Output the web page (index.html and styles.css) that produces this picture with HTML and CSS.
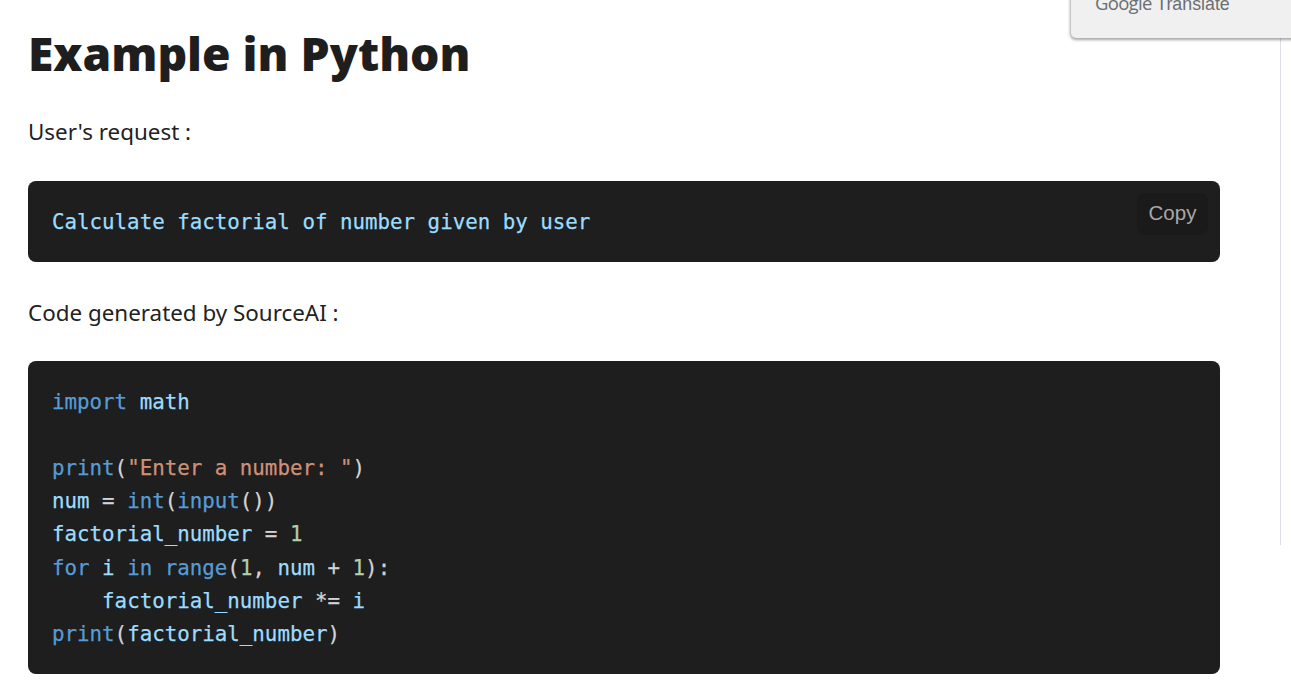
FILE: index.html
```html
<!DOCTYPE html>
<html lang="en">
<head>
<meta charset="utf-8">
<title>Example in Python</title>
<link rel="stylesheet" href="styles.css">
</head>
<body>
<div class="page">
  <main class="content">
    <h1 class="title">Example in Python</h1>
    <p class="text">User's request :</p>
    <div class="code-block">
      <button class="copy" type="button">Copy</button>
      <pre class="code"><span class="var">Calculate factorial of number given by user</span></pre>
    </div>
    <p class="text">Code generated by SourceAI :</p>
    <div class="code-block">
      <pre class="code"><span class="kw">import</span> <span class="var">math</span>

<span class="kw">print</span>(<span class="str">"Enter a number: "</span>)
<span class="var">num</span> = <span class="kw">int</span>(<span class="kw">input</span>())
<span class="var">factorial_number</span> = <span class="num">1</span>
<span class="kw">for</span> <span class="var">i</span> <span class="kw">in</span> <span class="kw">range</span>(<span class="num">1</span>, <span class="var">num</span> + <span class="num">1</span>):
    <span class="var">factorial_number</span> *= <span class="var">i</span>
<span class="kw">print</span>(<span class="var">factorial_number</span>)</pre>
    </div>
  </main>
  <aside class="rail"></aside>
</div>
<div class="translate"><span class="brand">Google</span> <span class="word">Translate</span></div>
</body>
</html>
```
FILE: styles.css
```css
html, body {
  margin: 0;
  height: 100%;
  overflow: hidden;
  background: #fff;
}
.page {
  display: flex;
  align-items: flex-start;
  height: 692px;
}
.content {
  width: 1192px;
  margin-left: 28px;
  flex: none;
}
.title {
  margin: 25px 0 0;
  font: 800 46.2px/57px "Open Sans", sans-serif;
  color: #1e1e1e;
}
.text {
  margin: 32px 0 0;
  font: 400 22.4px/35px "Noto Sans", sans-serif;
  color: #222;
}
.code-block {
  position: relative;
  margin-top: 32px;
  background: #1e1e1e;
  border-radius: 8px;
  padding: 25px 24px 23px;
}
.code-block + .text {
  margin-top: 33px;
}
.code-block + .text + .code-block {
  margin-top: 31px;
}
.code {
  margin: 0;
  font: 400 20.8px/33.1px "DejaVu Sans Mono", monospace;
  -webkit-text-stroke: 0.25px currentColor;
  color: #d4d4d4;
}
.kw { color: #569cd6; }
.var { color: #9cdcfe; }
.str { color: #ce9178; }
.num { color: #b5cea8; }
.copy {
  position: absolute;
  top: 12px;
  right: 12px;
  width: 71px;
  height: 42px;
  padding: 0 0 2px;
  border: 0;
  border-radius: 8px;
  background: #1a1a1a;
  color: #a8a8a8;
  font: 400 20.5px/40px "Liberation Sans", sans-serif;
}
.rail {
  flex: none;
  width: 0;
  height: 545px;
  margin-left: 60px;
  border-left: 1px solid #dcdfe6;
}
.translate {
  position: absolute;
  top: -20px;
  left: 1071px;
  width: 240px;
  height: 58px;
  box-sizing: border-box;
  padding: 11px 0 0 24px;
  background: #f0f0f0;
  border-radius: 5px;
  box-shadow: 0 1px 3px 1px rgba(0, 0, 0, 0.35);
  font: 400 17.8px/24px "Liberation Sans", sans-serif;
  color: #6b6e72;
  white-space: nowrap;
}
.brand {
  font-family: "Open Sans", sans-serif;
  font-size: 18.5px;
  letter-spacing: -0.7px;
}
```
